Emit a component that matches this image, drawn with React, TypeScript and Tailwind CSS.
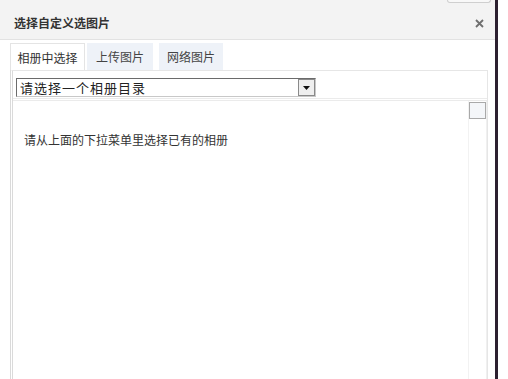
import React from 'react'

const tabs = ['相册中选择', '上传图片', '网络图片']

export default function App() {
  return (
    <div className="w-[508px] h-[379px] overflow-hidden flex bg-white text-[#333] font-['Noto_Sans_CJK_SC','DejaVu_Sans',sans-serif]">
      {/* Dialog */}
      <div className="w-[495px] h-full flex flex-col">
        {/* Title bar */}
        <div className="h-[40px] shrink-0 bg-[#f3f3f3] border-b border-[#e2e2e2] flex items-center justify-between pl-[14px] pr-[11px] pt-[7px] relative">
          <div className="absolute right-[4px] top-0 w-[44px] h-[3px] rounded-b-sm border border-t-0 border-[#cfcfcf] bg-[#f8f8f8]" />
          <span className="text-[12px] font-bold leading-none text-[#333]">选择自定义选图片</span>
          <svg width="9" height="9" viewBox="0 0 9 9">
            <path d="M1 1L8 8M8 1L1 8" stroke="#6f6f6f" strokeWidth="1.8" />
          </svg>
        </div>

        {/* Body */}
        <div className="flex-1 flex flex-col pl-[10px] pr-[7px] pt-[3px]">
          {/* Tabs */}
          <div className="flex h-[27px] shrink-0 items-end">
            <TabItem label={tabs[0]} active />
            <TabItem label={tabs[1]} className="ml-[2px] w-[66px]" />
            <TabItem label={tabs[2]} className="ml-[6px] w-[64px]" />
          </div>

          {/* Panel */}
          <div className="flex-1 flex flex-col border-t border-r border-[#e6e6e6] border-l-[3px] border-l-[#dadada] border-double">
            <div className="h-[30px] shrink-0 flex items-start pt-[7px] pl-[3px] border-b-[3px] border-double border-b-[#ebebeb]">
              <div className="w-[300px] h-[19px] flex items-stretch border border-t-[#6b6b6b] border-l-[#6b6b6b] border-r-[#c8c8c8] border-b-[#c8c8c8] bg-white">
                <span className="flex-1 pl-[3px] text-[13px] tracking-[1px] leading-[17px] text-[#222]">
                  请选择一个相册目录
                </span>
                <div className="w-[17px] flex items-center justify-center border border-[#8a8a8a] bg-[#efefef]">
                  <svg width="7" height="4" viewBox="0 0 7 4">
                    <path d="M0 0H7L3.5 4Z" fill="#111" />
                  </svg>
                </div>
              </div>
            </div>

            <div className="flex-1 flex">
              <div className="flex-1 pl-[11px] pt-[31px] border-r border-[#f2f2f2]">
                <p className="text-[12px] leading-[16px] text-[#333]">请从上面的下拉菜单里选择已有的相册</p>
              </div>
              <div className="w-[18px] flex flex-col border-r border-[#f0f0f0]">
                <div className="h-[17px] border border-[#a9a9a9] bg-[#f4f6f9] mt-[1px]" />
              </div>
            </div>
          </div>
        </div>
      </div>

      {/* Window edge */}
      <div className="w-[3px] h-full bg-[#2c2030]" />
      <div className="flex-1 h-full bg-white" />
    </div>
  )
}

interface TabItemProps {
  label: string
  active?: boolean
  className?: string
}

function TabItem({ label, active, className }: TabItemProps) {
  return (
    <div
      className={
        active
          ? 'w-[75px] h-[28px] -mb-px flex items-center justify-center text-[12px] bg-white border border-b-0 border-[#e4e4e4] text-[#333]'
          : 'h-[27px] flex items-center justify-center text-[12px] bg-[#eef2f8] text-[#444] ' + (className ?? '')
      }
    >
      {label}
    </div>
  )
}
